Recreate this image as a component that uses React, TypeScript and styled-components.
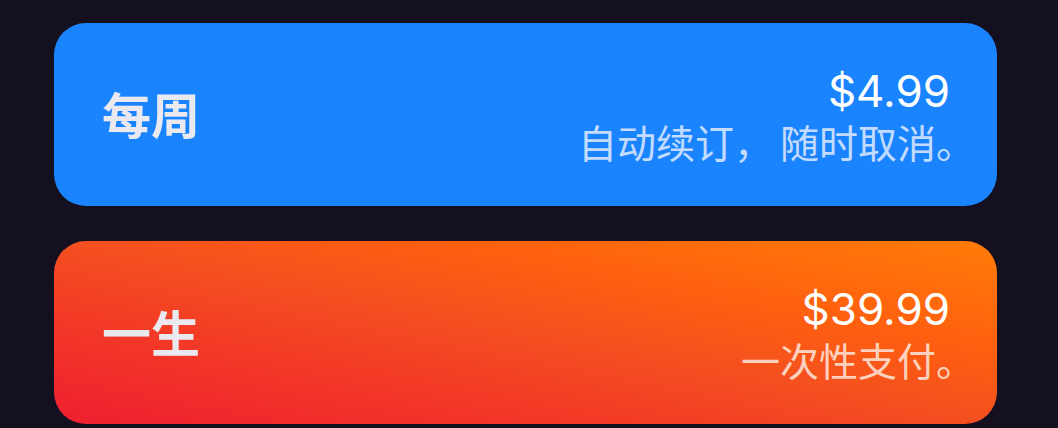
import React from "react";
import styled, { createGlobalStyle } from "styled-components";

const Global = createGlobalStyle`
  html, body {
    margin: 0;
    padding: 0;
    background: #151020;
  }
  body {
    font-family: Inter, "Noto Sans CJK SC", sans-serif;
    -webkit-font-smoothing: antialiased;
  }
`;

const Page = styled.div`
  display: flex;
  flex-direction: column;
  gap: 35px;
  padding: 23px 61px 0 54px;
  height: 428px;
  box-sizing: border-box;
  overflow: hidden;
`;

const Card = styled.div<{ $variant: "blue" | "sunset" }>`
  height: 183px;
  flex: none;
  border-radius: 32px;
  box-sizing: border-box;
  padding: 0 47px 0 48px;
  display: flex;
  align-items: center;
  justify-content: space-between;
  background: ${(p) =>
    p.$variant === "blue"
      ? "#1a84fe"
      : "linear-gradient(to top right, #ee1f30 0%, #f33a26 30%, #f44f20 50%, #ff600f 71%, #ff7c08 100%)"};
`;

const Title = styled.div`
  font-family: "Noto Sans CJK SC", sans-serif;
  font-size: 49px;
  font-weight: 700;
  color: #e9e9ef;
  line-height: 1;
  margin-top: -4px;
`;

const Info = styled.div`
  display: flex;
  flex-direction: column;
  align-items: flex-end;
  gap: 8px;
  margin-top: 4px;
`;

const Price = styled.div`
  font-family: Inter, sans-serif;
  font-size: 44px;
  font-weight: 400;
  color: #ffffff;
  line-height: 40px;
`;

const Note = styled.div<{ $tint: string }>`
  font-family: "Noto Sans CJK SC", sans-serif;
  font-size: 39px;
  font-weight: 400;
  color: ${(p) => p.$tint};
  line-height: 44px;
  margin-right: -25px;
  white-space: nowrap;
`;

const Comma = styled.span`
  margin-right: 7px;
`;

const plans = [
  {
    id: "weekly",
    variant: "blue" as const,
    title: "每周",
    price: "$4.99",
    note: ["自动续订，", "随时取消。"],
    tint: "rgba(235, 240, 255, 0.82)",
  },
  {
    id: "lifetime",
    variant: "sunset" as const,
    title: "一生",
    price: "$39.99",
    note: ["一次性支付。"],
    tint: "rgba(255, 232, 222, 0.85)",
  },
];

export default function App() {
  return (
    <>
      <Global />
      <Page>
        {plans.map((p) => (
          <Card key={p.id} $variant={p.variant}>
            <Title>{p.title}</Title>
            <Info>
              <Price>{p.price}</Price>
              <Note $tint={p.tint}>
                {p.note.length > 1 ? (
                  <>
                    <Comma>{p.note[0]}</Comma>
                    {p.note[1]}
                  </>
                ) : (
                  p.note[0]
                )}
              </Note>
            </Info>
          </Card>
        ))}
      </Page>
    </>
  );
}
